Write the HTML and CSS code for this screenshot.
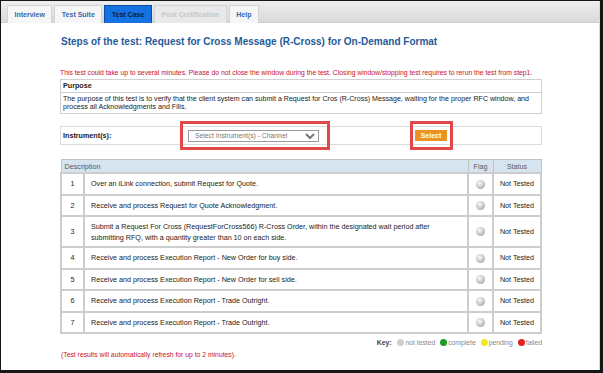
FILE: index.html
```html
<!DOCTYPE html>
<html lang="en">
<head>
    <meta charset="UTF-8">
    <title>Test Case - Request for Cross Message</title>
    <link rel="stylesheet" href="styles.css">
</head>
<body>
    <div class="frame">
        <div class="tabbar">
            <span class="tab">Interview</span>
            <span class="tab">Test Suite</span>
            <span class="tab active">Test Case</span>
            <span class="tab disabled">Post Certification</span>
            <span class="tab">Help</span>
        </div>

        <div class="content">
            <h1>Steps of the test: Request for Cross Message (R-Cross) for On-Demand Format</h1>

            <p class="warning">This test could take up to several minutes. Please do not close the window during the test. Closing window/stopping test requires to rerun the test from step1.</p>

            <div class="purpose">
                <div class="purpose-head">Purpose</div>
                <div class="purpose-body">The purpose of this test is to verify that the client system can submit a Request for Cros (R-Cross) Message, waiting for the proper RFC window, and process all Acknowledgments and Fills.</div>
            </div>

            <div class="instrument-row">
                <span class="instrument-label">Instrument(s):</span>
                <span class="hl hl-select">
                    <select class="instrument-select">
                        <option>Select Instrument(s) - Channel</option>
                    </select>
                </span>
                <span class="hl hl-btn">
                    <button class="select-btn">Select</button>
                </span>
            </div>

            <table class="steps">
                <thead>
                    <tr>
                        <th class="desc-head" colspan="2">Description</th>
                        <th class="flag-col">Flag</th>
                        <th class="status-col">Status</th>
                    </tr>
                </thead>
                <tbody>
                    <tr>
                        <td class="num">1</td>
                        <td class="desc">Over an iLink connection, submit Request for Quote.</td>
                        <td class="flag"><span class="dot"></span></td>
                        <td class="status">Not Tested</td>
                    </tr>
                    <tr>
                        <td class="num">2</td>
                        <td class="desc">Receive and process Request for Quote Acknowledgment.</td>
                        <td class="flag"><span class="dot"></span></td>
                        <td class="status">Not Tested</td>
                    </tr>
                    <tr class="tall">
                        <td class="num">3</td>
                        <td class="desc">Submit a Request For Cross (RequestForCross566) R-Cross Order, within the designated wait period after submitting RFQ, with a quantity greater than 10 on each side.</td>
                        <td class="flag"><span class="dot"></span></td>
                        <td class="status">Not Tested</td>
                    </tr>
                    <tr>
                        <td class="num">4</td>
                        <td class="desc">Receive and process Execution Report - New Order for buy side.</td>
                        <td class="flag"><span class="dot"></span></td>
                        <td class="status">Not Tested</td>
                    </tr>
                    <tr>
                        <td class="num">5</td>
                        <td class="desc">Receive and process Execution Report - New Order for sell side.</td>
                        <td class="flag"><span class="dot"></span></td>
                        <td class="status">Not Tested</td>
                    </tr>
                    <tr>
                        <td class="num">6</td>
                        <td class="desc">Receive and process Execution Report - Trade Outright.</td>
                        <td class="flag"><span class="dot"></span></td>
                        <td class="status">Not Tested</td>
                    </tr>
                    <tr>
                        <td class="num">7</td>
                        <td class="desc">Receive and process Execution Report - Trade Outright.</td>
                        <td class="flag"><span class="dot"></span></td>
                        <td class="status">Not Tested</td>
                    </tr>
                </tbody>
            </table>

            <div class="key">
                <strong>Key:</strong>
                <span class="key-dot grey"></span>not tested
                <span class="key-dot green"></span>complete
                <span class="key-dot yellow"></span>pending
                <span class="key-dot red"></span>failed
            </div>

            <p class="refresh">(Test results will automatically refresh for up to 2 minutes).</p>
        </div>
    </div>
</body>
</html>
```

FILE: styles.css
```css
html, body {
    margin: 0;
    padding: 0;
    background: #161616;
}
body {
    font-family: "Liberation Sans", Arial, sans-serif;
    font-size: 7.2px;
    color: #222;
    width: 603px;
    height: 373px;
    overflow: hidden;
}
.frame {
    margin: 1px 3px 0 1px;
    height: 369px;
    background: #fff;
    border-right: 1px solid #d8d8d8;
}
.tabbar {
    height: 22px;
    box-sizing: border-box;
    padding: 4px 0 0 6px;
    display: flex;
    gap: 2px;
    background: linear-gradient(#eeeeee, #d9d9d9);
    border-bottom: 1px solid #cfcfcf;
}
.tab {
    display: flex;
    align-items: center;
    padding: 0 6.5px;
    height: 18px;
    box-sizing: border-box;
    background: #f6f6f6;
    border: 1px solid #d4d4d4;
    border-bottom: none;
    color: #3a66ad;
    font-weight: bold;
    font-size: 7px;
}
.tab.active {
    background: #1672e0;
    border-color: #0c4fa8;
    color: #0b1e3c;
}
.tab.disabled {
    background: #e9e9e9;
    color: #c8c8c8;
}
.content {
    padding: 0 0 0 59px;
    width: 482px;
}
h1 {
    margin: 13px 0 0 1px;
    font-size: 10px;
    line-height: 12px;
    color: #1f5a99;
}
.warning {
    margin: 20px 0 0;
    font-size: 6.8px;
    line-height: 9px;
    color: #c8102e;
}
.purpose {
    margin-top: 2px;
    border: 1px solid #d0d0d0;
}
.purpose-head {
    font-weight: bold;
    padding: 0 2px;
    height: 12px;
    line-height: 12px;
    border-bottom: 1px solid #d0d0d0;
}
.purpose-body {
    padding: 2px 2px;
    line-height: 8px;
    font-size: 7.1px;
}
.instrument-row {
    margin-top: 12px;
    height: 19px;
    box-sizing: border-box;
    border: 1px solid #dcdcdc;
    display: flex;
    align-items: center;
    padding-left: 2px;
}
.instrument-label {
    font-weight: bold;
    width: 117px;
}
.hl {
    border: 3px solid #e14848;
    display: inline-flex;
    align-items: center;
    height: 29px;
    box-sizing: border-box;
    margin: -5px 0;
}
.hl-select {
    padding: 0 8px 0 5px;
}
.instrument-select {
    width: 131px;
    height: 12px;
    padding: 0 2px;
    font-family: "Liberation Sans", Arial, sans-serif;
    font-size: 6.8px;
    color: #777;
    border: 1px solid #9a9a9a;
    border-radius: 0;
    background: #fff;
}
.hl-btn {
    margin-left: 80px;
    padding: 0 3px 0 2px;
}
.select-btn {
    width: 32px;
    height: 11px;
    padding: 0;
    border: none;
    background: #eb9320;
    color: #fff;
    font-family: "Liberation Sans", Arial, sans-serif;
    font-weight: bold;
    font-size: 7px;
}
.steps {
    margin-top: 14px;
    width: 482px;
    border-collapse: collapse;
    border: 1px solid #c2c2c2;
}
.steps th {
    background: #d5e4ef;
    color: #5a5a5a;
    font-weight: normal;
    height: 12px;
    padding: 0;
    border: 1px solid #c2c2c2;
}
.steps th.desc-head {
    text-align: left;
    padding-left: 3px;
}
.steps td {
    border: 2px solid #cdcdcd;
    height: 19.5px;
    padding: 0;
}
.steps tr.tall td {
    height: 29px;
}
.num {
    width: 21px;
    text-align: center;
}
.desc {
    padding: 0 6px !important;
    line-height: 11px;
}
.flag-col, .flag {
    width: 23px;
    text-align: center;
}
.status-col, .status {
    width: 46px;
    text-align: center;
}
.dot {
    display: inline-block;
    width: 9px;
    height: 9px;
    border-radius: 50%;
    vertical-align: middle;
    background: radial-gradient(circle at 40% 35%, #fafafa, #c4c4c4 55%, #8d8d8d);
}
.key {
    margin-top: 4px;
    text-align: right;
    color: #8a8a8a;
    font-size: 6.8px;
    line-height: 9px;
}
.key strong {
    color: #444;
    margin-right: 1px;
}
.key-dot {
    display: inline-block;
    width: 7px;
    height: 7px;
    border-radius: 50%;
    vertical-align: -1px;
    margin: 0 1px 0 3px;
}
.key-dot.grey { background: #cfcfcf; }
.key-dot.green { background: #1d9a25; }
.key-dot.yellow { background: #f2ea1a; }
.key-dot.red { background: #e02222; }
.refresh {
    margin: 3px 0 0 1px;
    color: #c8102e;
    font-size: 6.8px;
    line-height: 9px;
}
```
